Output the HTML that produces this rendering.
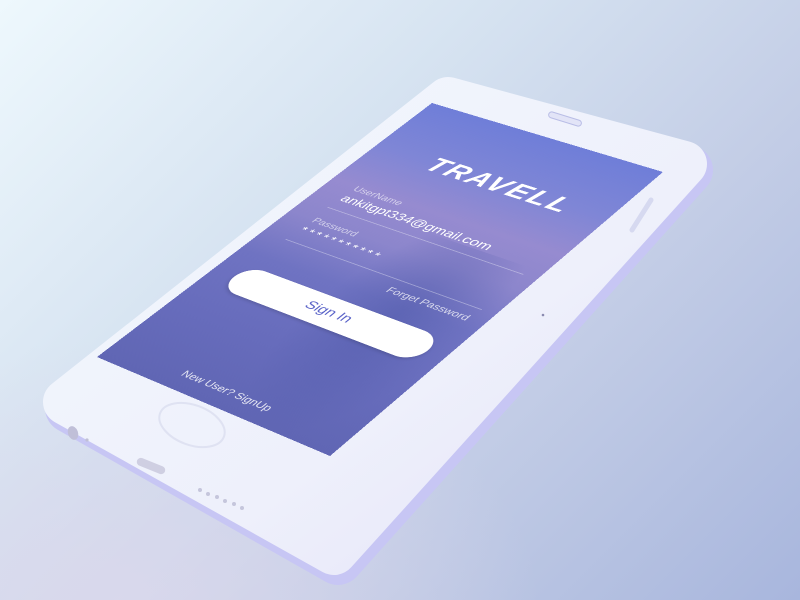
<!DOCTYPE html>
<html><head><meta charset="utf-8"><style>
html,body{margin:0;padding:0;width:800px;height:600px;overflow:hidden}
body{background:linear-gradient(135deg,#eef8fd 0%,#d6e3f1 35%,#c3cde6 65%,#a8b6dd 100%);position:relative;font-family:"Liberation Sans",sans-serif}
.bl{position:absolute;left:0;top:0;width:800px;height:600px;background:radial-gradient(ellipse 420px 260px at 120px 600px,rgba(220,216,236,.8),rgba(220,216,236,0))}
svg{position:absolute;left:0;top:0}
#scr{position:absolute;left:0;top:0;width:250px;height:444px;transform-origin:0 0;
transform:matrix3d(0.74232,0.22888,0,-0.00027404,-0.77777,0.48644,0,-0.00023986,0,0,1,0,432,103,0,1);
background:linear-gradient(180deg,#6f7ed8 0%,#7f86d6 18%,#968bd0 32%,#8c86cc 45%,#6f73c2 60%,#676cbc 80%,#6066b4 100%);overflow:hidden;color:#fff}
.bld{position:absolute;left:110px;top:170px;width:140px;height:280px;background:radial-gradient(ellipse at 50% 40%,rgba(80,90,170,.55),rgba(80,90,170,0) 70%)}
.t{position:absolute;white-space:nowrap}
</style></head><body>
<div class="bl"></div>
<svg width="800" height="600" viewBox="0 0 800 600">
<defs>
<linearGradient id="body" x1="0" y1="0" x2="1" y2="1">
<stop offset="0" stop-color="#f3f8fe"/><stop offset="0.6" stop-color="#eef0fb"/><stop offset="1" stop-color="#e4e2f8"/></linearGradient>
</defs>
<polygon points="452,104 688,170 338,560 70,408" fill="#c7c6f4" stroke="#c7c6f4" stroke-width="50" stroke-linejoin="round"/>
<polygon points="448,100 684,164 334,552 66,402" fill="url(#body)" stroke="url(#body)" stroke-width="46" stroke-linejoin="round"/>
<rect x="548" y="116" width="34" height="6" rx="3" fill="#e2e4f7" stroke="#b9bde6" stroke-width="1" transform="rotate(17 565 119)"/>
<ellipse cx="192" cy="425" rx="34" ry="20" fill="none" stroke="#dfe2f2" stroke-width="2" transform="rotate(20 192 425)"/>
<ellipse cx="73" cy="433" rx="5" ry="7" fill="#c0bfd8" transform="rotate(-20 73 433)"/>
<circle cx="87" cy="440" r="1.6" fill="#c0c0d6"/>
<rect x="136" y="462" width="30" height="8" rx="4" fill="#cfcfe2" transform="rotate(22 151 466)"/>
<g fill="#c5c6dc"><circle cx="200" cy="490" r="2"/><circle cx="208" cy="494" r="2"/><circle cx="217" cy="497" r="2"/><circle cx="225" cy="501" r="2"/><circle cx="234" cy="504" r="2"/><circle cx="242" cy="508" r="2"/></g>
<path d="M651 200 L632 230" stroke="#d6d9f0" stroke-width="5" stroke-linecap="round"/>
<circle cx="543" cy="315" r="1.3" fill="#8a8ab0"/>
</svg>
<div id="scr">
<div class="bld"></div>
<div class="t" style="left:0;width:274px;text-align:center;top:66px;font-size:30px;font-weight:bold;font-style:italic;letter-spacing:2px">TRAVELL</div>
<div class="t" style="left:28px;top:140px;font-size:11px;color:rgba(255,255,255,.6)">UserName</div>
<div class="t" style="left:28px;top:154px;font-size:15px">ankitgpt334@gmail.com</div>
<div class="t" style="left:26px;top:180px;width:210px;height:1px;background:rgba(255,255,255,.35)"></div>
<div class="t" style="left:28px;top:196px;font-size:11px;color:rgba(255,255,255,.6)">Password</div>
<div class="t" style="left:28px;top:210px;font-size:13px;letter-spacing:3px">***********</div>
<div class="t" style="left:26px;top:236px;width:210px;height:1px;background:rgba(255,255,255,.35)"></div>
<div class="t" style="right:16px;top:246px;font-size:11px;color:rgba(255,255,255,.75)">Forget Password</div>
<div class="t" style="left:24px;top:282px;width:208px;height:38px;border-radius:19px;background:#fff;color:#5a63c8;font-size:15px;text-align:center;line-height:38px;box-shadow:0 2px 4px rgba(0,0,0,.15)">Sign In</div>
<div class="t" style="left:0;width:250px;text-align:center;top:418px;font-size:11px;color:rgba(255,255,255,.85)">New User? SignUp</div>
</div>
</body></html>
